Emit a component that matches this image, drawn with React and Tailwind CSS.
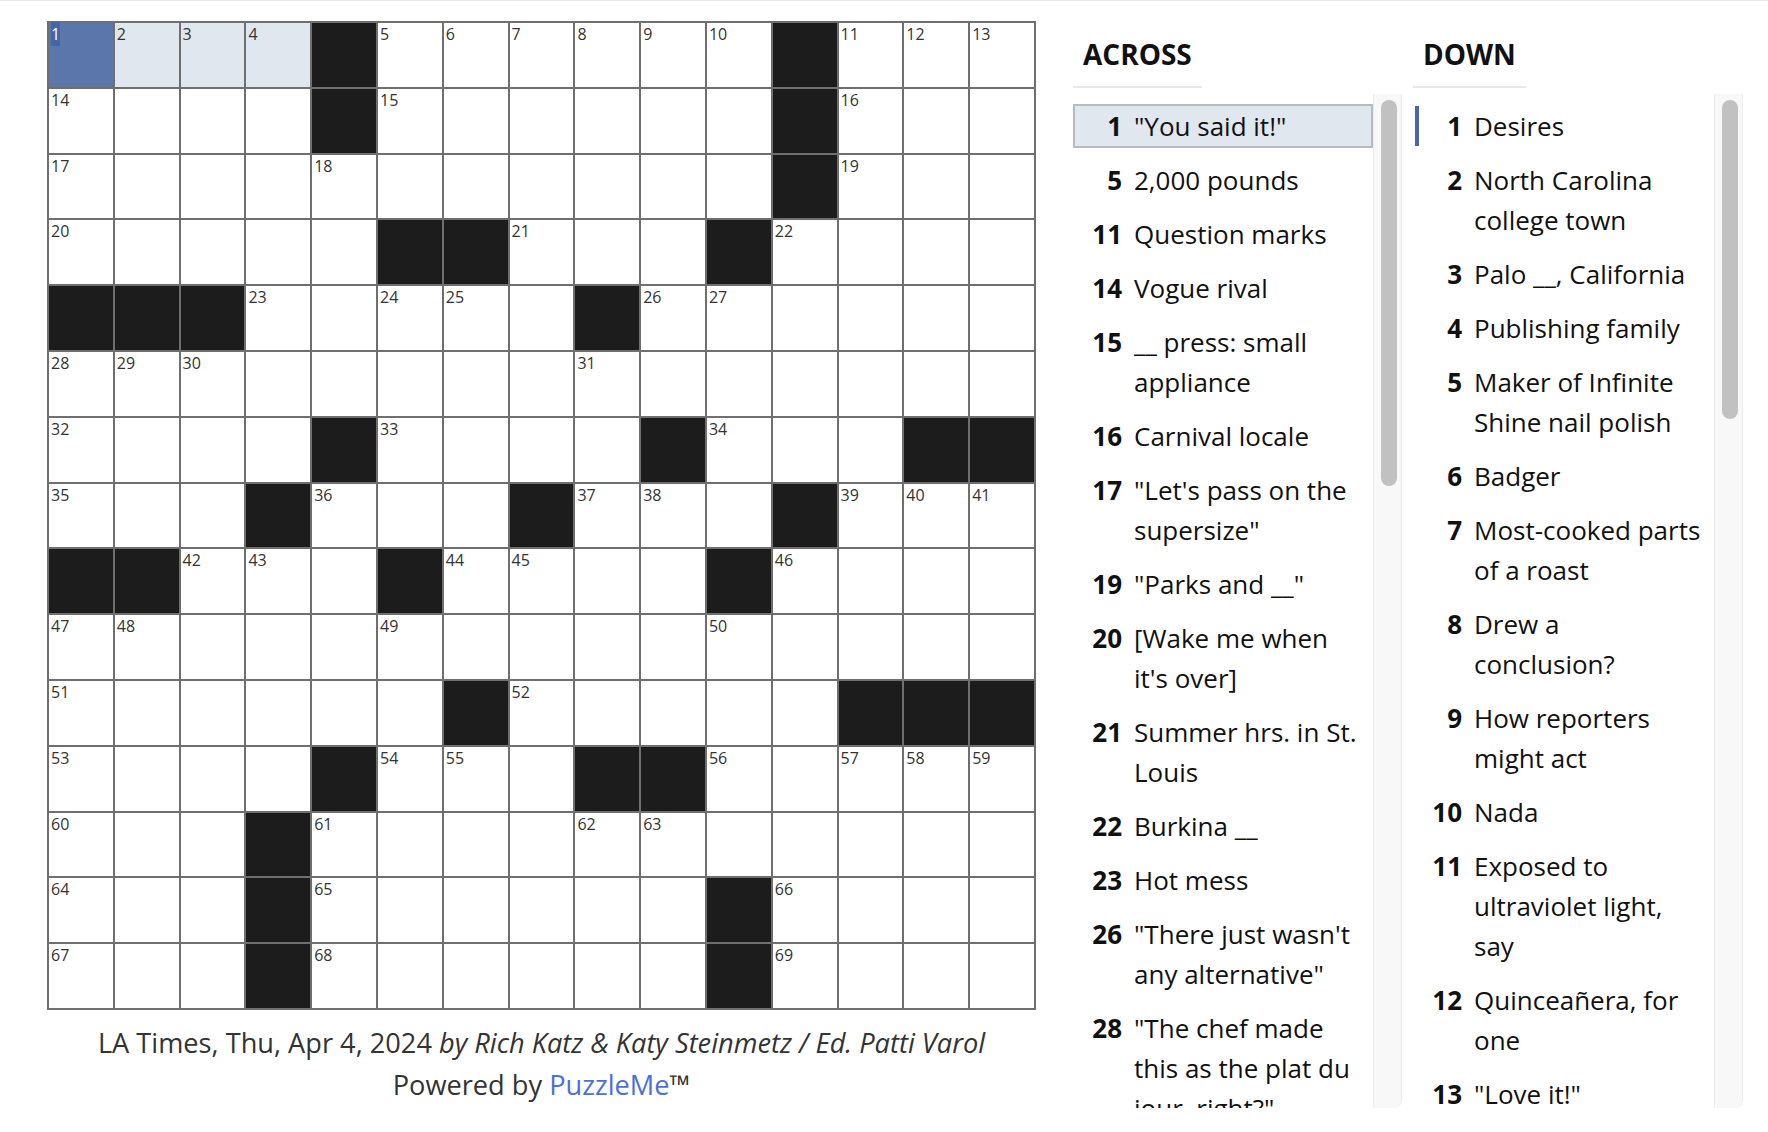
import React from 'react';

const LAYOUT = [
  '....#......#...',
  '....#......#...',
  '...........#...',
  '.....##...#....',
  '###.....#......',
  '...............',
  '....#....#...##',
  '...#...#...#...',
  '##...#....#....',
  '...............',
  '......#.....###',
  '....#...##.....',
  '...#...........',
  '...#......#....',
  '...#......#....',
];

const ACROSS = [
  { n: 1, lines: ['"You said it!"'], selected: true },
  { n: 5, lines: ['2,000 pounds'] },
  { n: 11, lines: ['Question marks'] },
  { n: 14, lines: ['Vogue rival'] },
  { n: 15, lines: ['__ press: small', 'appliance'] },
  { n: 16, lines: ['Carnival locale'] },
  { n: 17, lines: ['"Let\'s pass on the', 'supersize"'] },
  { n: 19, lines: ['"Parks and __"'] },
  { n: 20, lines: ['[Wake me when', "it's over]"] },
  { n: 21, lines: ['Summer hrs. in St.', 'Louis'] },
  { n: 22, lines: ['Burkina __'] },
  { n: 23, lines: ['Hot mess'] },
  { n: 26, lines: ['"There just wasn\'t', 'any alternative"'] },
  { n: 28, lines: ['"The chef made', 'this as the plat du', 'jour, right?"'] },
  { n: 31, lines: ['Tooth layer'] },
];

const DOWN = [
  { n: 1, lines: ['Desires'], selected: true },
  { n: 2, lines: ['North Carolina', 'college town'] },
  { n: 3, lines: ['Palo __, California'] },
  { n: 4, lines: ['Publishing family'] },
  { n: 5, lines: ['Maker of Infinite', 'Shine nail polish'] },
  { n: 6, lines: ['Badger'] },
  { n: 7, lines: ['Most-cooked parts', 'of a roast'] },
  { n: 8, lines: ['Drew a', 'conclusion?'] },
  { n: 9, lines: ['How reporters', 'might act'] },
  { n: 10, lines: ['Nada'] },
  { n: 11, lines: ['Exposed to', 'ultraviolet light,', 'say'] },
  { n: 12, lines: ['Quinceañera, for', 'one'] },
  { n: 13, lines: ['"Love it!"'] },
  { n: 18, lines: ['Lock opener'] },
];

// standard crossword numbering from the black-square layout
function numberGrid(rows) {
  const isWhite = (r, c) => r >= 0 && r < 15 && c >= 0 && c < 15 && rows[r][c] === '.';
  let n = 0;
  return rows.map((row, r) =>
    row.split('').map((ch, c) => {
      if (ch === '#') return { black: true };
      const across = !isWhite(r, c - 1) && isWhite(r, c + 1);
      const down = !isWhite(r - 1, c) && isWhite(r + 1, c);
      return { black: false, num: across || down ? ++n : null };
    })
  );
}

function Grid() {
  const cells = numberGrid(LAYOUT);
  return (
    <div className="grid w-fit grid-cols-[repeat(15,63.8px)] gap-[2px] bg-[#6f6f6f] p-[2px]">
      {cells.map((row, r) =>
        row.map((cell, c) => {
          const selected = r === 0 && c === 0;
          const inWord = r === 0 && c < 4;
          let bg = 'bg-white';
          if (cell.black) bg = 'bg-[#1c1c1c]';
          else if (selected) bg = 'bg-[#5b76ab]';
          else if (inWord) bg = 'bg-[#e0e7ef]';
          return (
            <div key={`${r}-${c}`} className={`relative h-[63.8px] w-[63.8px] ${bg}`}>
              {cell.num && (
                <span
                  className={`absolute left-[2px] top-[-1px] text-[16px] leading-normal ${
                    selected ? 'bg-[#4565a4] text-white' : 'text-[#333]'
                  }`}
                >
                  {cell.num}
                </span>
              )}
            </div>
          );
        })
      )}
    </div>
  );
}

function ClueColumn({ title, clues, listWidth, thumbClass, variant }) {
  return (
    <div className="flex flex-col">
      <div className="w-fit border-b-2 border-[#e9e9e4] px-[10px] pb-[12px] pt-[33px] text-[28px] font-bold leading-[40px] text-[#111]">
        {title}
      </div>
      <div className="mt-[6px] flex h-[1014px]">
        <ul className={`${listWidth} overflow-hidden pt-[10px]`}>
          {clues.map((clue) => {
            let state = 'border-transparent';
            if (clue.selected && variant === 'across') state = 'border-[#b5bbc4] bg-[#e0e7ef]';
            if (clue.selected && variant === 'down') state = 'border-transparent shadow-[inset_4px_0_0_#4a66a8]';
            return (
              <li key={clue.n} className={`mb-[10px] flex border-2 pl-[7px] text-[26px] leading-[40px] text-[#111] ${state}`}>
                <span className="w-[40px] shrink-0 text-right font-bold">{clue.n}</span>
                <span className="ml-[12px]">
                  {clue.lines.map((line, i) => (
                    <span key={i} className="block whitespace-nowrap">{line}</span>
                  ))}
                </span>
              </li>
            );
          })}
        </ul>
        <div className="w-[29px] rounded-br-[8px] border-x border-[#ececec] bg-[#f8f8f8] pl-[7px] pt-[6px]">
          <div className={`w-[16px] rounded-full bg-[#c1c1c1] ${thumbClass}`} />
        </div>
      </div>
    </div>
  );
}

export default function App() {
  return (
    <div className="h-screen overflow-hidden border-t border-[#e4e9f0] bg-white font-['Open_Sans',sans-serif]">
      <div className="flex">
        <div className="w-[1039px] shrink-0 pl-[47px] pt-[20px]">
          <Grid />
          <div className="mt-[12px] w-[989px] text-center text-[27.2px] leading-[42px] text-[#333]">
            <p>
              LA Times, Thu, Apr 4, 2024 <em>by Rich Katz &amp; Katy Steinmetz / Ed. Patti Varol</em>
            </p>
            <p>
              Powered by <span className="text-[#4d6fd8]">PuzzleMe</span>™
            </p>
          </div>
        </div>
        <div className="ml-[34px] flex gap-[11px]">
          <ClueColumn title="ACROSS" clues={ACROSS} listWidth="w-[300px]" thumbClass="h-[386px]" variant="across" />
          <ClueColumn title="DOWN" clues={DOWN} listWidth="w-[301px]" thumbClass="h-[319px]" variant="down" />
        </div>
      </div>
    </div>
  );
}
